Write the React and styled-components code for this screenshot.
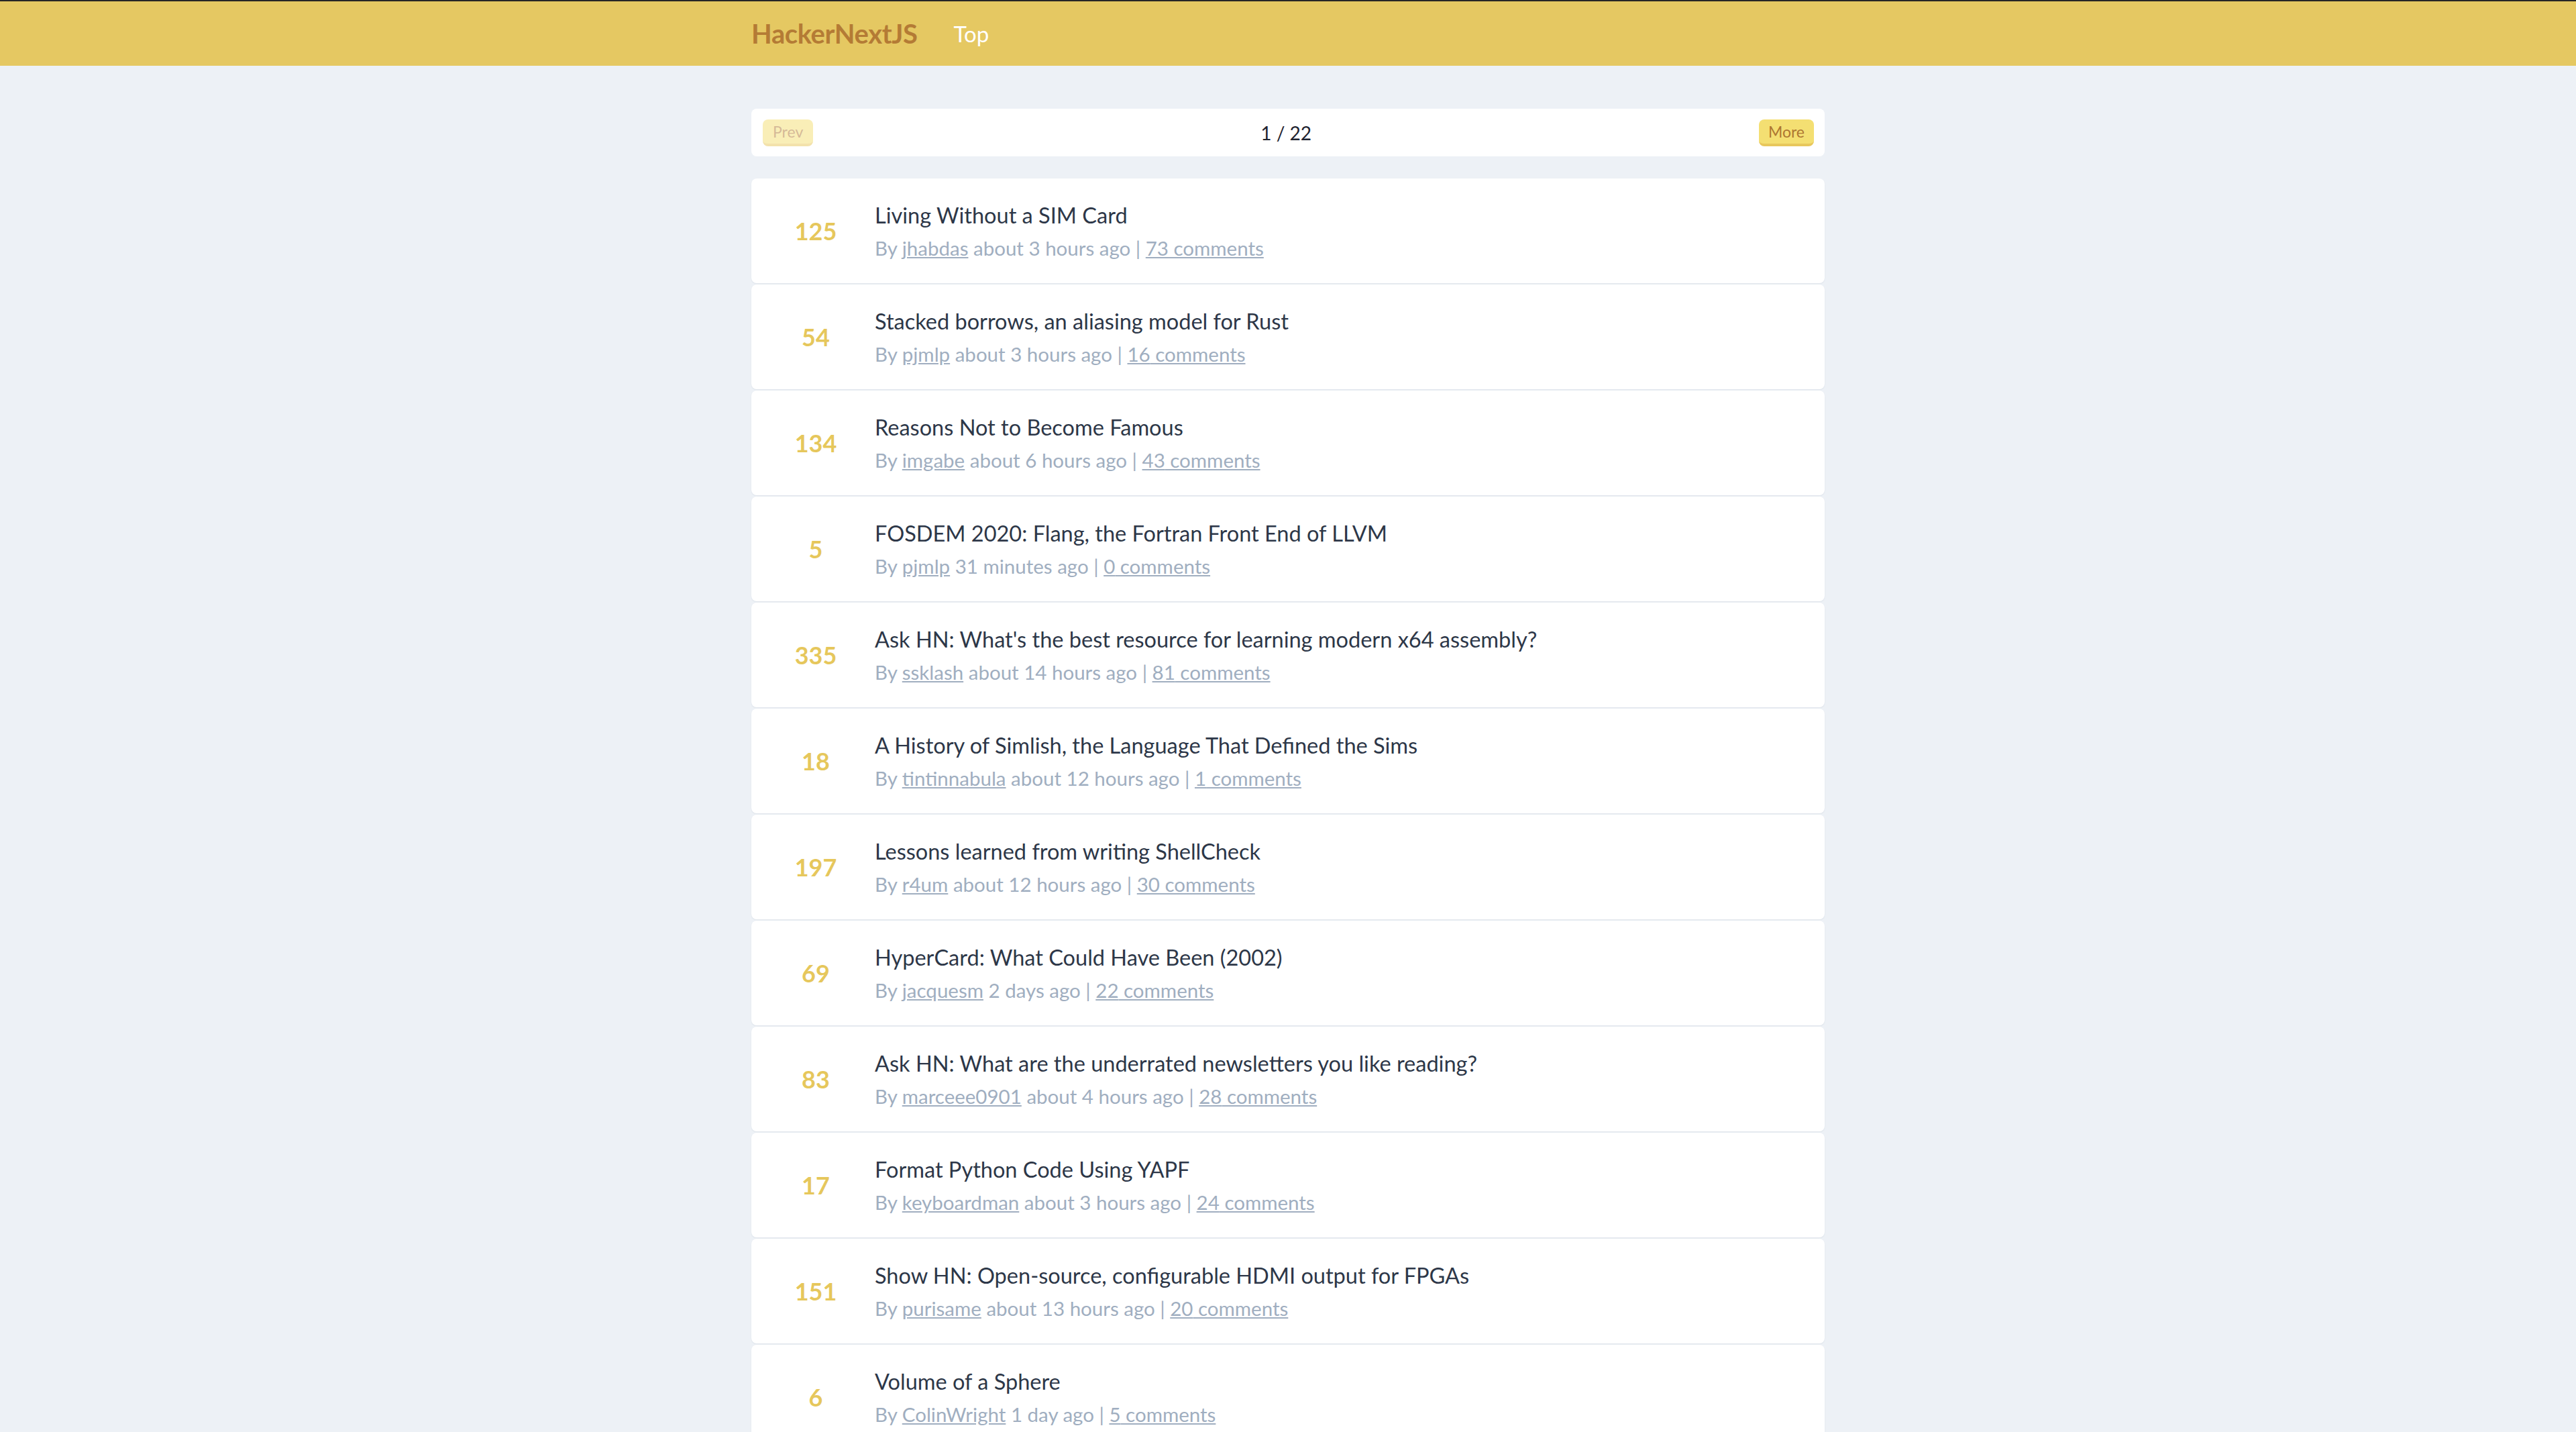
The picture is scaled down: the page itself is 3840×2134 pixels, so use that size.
import React from 'react';
import styled, { createGlobalStyle } from 'styled-components';

const GlobalStyle = createGlobalStyle`
    html, body {
        margin: 0;
        padding: 0;
        background: #edf1f6;
        font-family: Lato, "Noto Sans", sans-serif;
    }
`

const Header = styled.header`
    border-top: 2px solid #262626;
    height: 96px;
    background: #e5c862;
`

const Container = styled.div`
    width: 1600px;
    margin: 0 auto;
`

const Nav = styled(Container)`
    display: flex;
    align-items: center;
    height: 100%;
`

const Brand = styled.a`
    font-size: 40px;
    font-weight: 700;
    color: #b47b35;
    text-decoration: none;
    margin-right: 54px;
    letter-spacing: -0.4px;
`

const NavLink = styled.a`
    font-size: 33px;
    color: #ffffff;
    text-decoration: none;
`

const Main = styled(Container)`
    padding-top: 64px;
`

const Pager = styled.div`
    display: flex;
    align-items: center;
    justify-content: space-between;
    background: #ffffff;
    border-radius: 8px;
    padding: 16px 16px 15px 17px;
    margin-bottom: 33px;
`

const PageCount = styled.span`
    font-size: 28px;
    color: #1f2430;
`

const PagerButton = styled.button`
    height: 40px;
    padding: 0 ${pr => pr.wide ? 14 : 15}px;
    font-family: inherit;
    font-size: 23px;
    color: #ad7631;
    background: #f4df72;
    border: none;
    border-bottom: 4px solid #e8c75c;
    border-radius: 8px;
    opacity: ${pr => pr.disabled ? 0.5 : 1};
`

const Story = styled.div`
    display: flex;
    align-items: center;
    height: 156px;
    box-sizing: border-box;
    padding: 0 32px;
    margin-bottom: 2px;
    background: #ffffff;
    border-radius: 8px;
    box-shadow: 0 1px 2px rgba(40, 60, 90, 0.08);
`

const Score = styled.div`
    width: 128px;
    flex-shrink: 0;
    text-align: center;
    font-size: 36px;
    font-weight: 700;
    color: #e6c75c;
`

const Body = styled.div`
    margin-left: 24px;
`

const Title = styled.div`
    font-size: 32.5px;
    line-height: 48px;
    color: #2d3748;
`

const Meta = styled.div`
    margin-top: 4px;
    font-size: 29.5px;
    line-height: 42px;
    color: #a0aec0;
    a {
        color: #a0aec0;
    }
`

const stories = [
    [125, 'Living Without a SIM Card', 'jhabdas', 'about 3 hours ago', 73],
    [54, 'Stacked borrows, an aliasing model for Rust', 'pjmlp', 'about 3 hours ago', 16],
    [134, 'Reasons Not to Become Famous', 'imgabe', 'about 6 hours ago', 43],
    [5, 'FOSDEM 2020: Flang, the Fortran Front End of LLVM', 'pjmlp', '31 minutes ago', 0],
    [335, "Ask HN: What's the best resource for learning modern x64 assembly?", 'ssklash', 'about 14 hours ago', 81],
    [18, 'A History of Simlish, the Language That Defined the Sims', 'tintinnabula', 'about 12 hours ago', 1],
    [197, 'Lessons learned from writing ShellCheck', 'r4um', 'about 12 hours ago', 30],
    [69, 'HyperCard: What Could Have Been (2002)', 'jacquesm', '2 days ago', 22],
    [83, 'Ask HN: What are the underrated newsletters you like reading?', 'marceee0901', 'about 4 hours ago', 28],
    [17, 'Format Python Code Using YAPF', 'keyboardman', 'about 3 hours ago', 24],
    [151, 'Show HN: Open-source, configurable HDMI output for FPGAs', 'purisame', 'about 13 hours ago', 20],
    [6, 'Volume of a Sphere', 'ColinWright', '1 day ago', 5],
]

//********************************************* */
function App() {
    return (
        <>
            <GlobalStyle />
            <Header>
                <Nav>
                    <Brand href="#">HackerNextJS</Brand>
                    <NavLink href="#">Top</NavLink>
                </Nav>
            </Header>
            <Main>
                <Pager>
                    <PagerButton disabled>Prev</PagerButton>
                    <PageCount>1 / 22</PageCount>
                    <PagerButton wide>More</PagerButton>
                </Pager>
                {stories.map(([score, title, by, when, comments], i) => (
                    <Story key={i}>
                        <Score>{score}</Score>
                        <Body>
                            <Title>{title}</Title>
                            <Meta>
                                By <a href="#">{by}</a> {when} | <a href="#">{comments} comments</a>
                            </Meta>
                        </Body>
                    </Story>
                ))}
            </Main>
        </>
    )
}

export default App;
